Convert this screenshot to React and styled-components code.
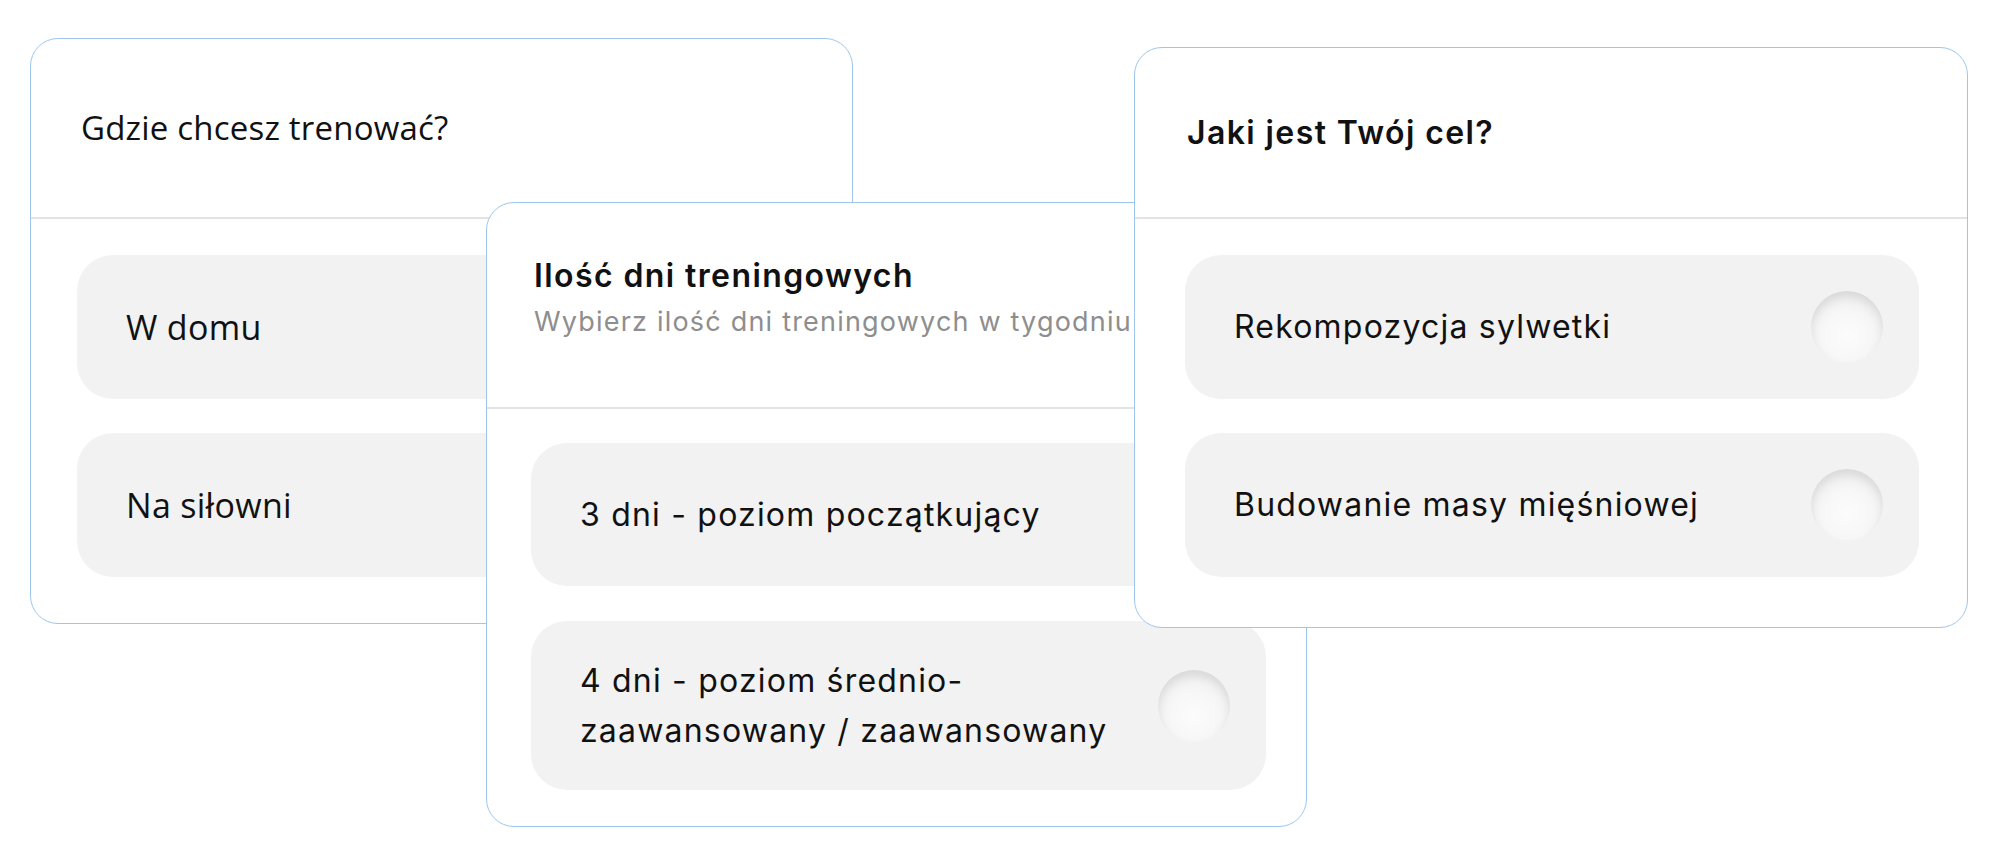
import React from "react";
import styled, { createGlobalStyle } from "styled-components";

const GlobalStyle = createGlobalStyle`
  html, body {
    margin: 0;
    padding: 0;
    background: #ffffff;
  }
  * {
    box-sizing: border-box;
  }
`;

const Canvas = styled.div`
  position: relative;
  width: 2000px;
  height: 858px;
  overflow: hidden;
  background: #ffffff;
`;

// the three cards are laid over each other like windows on a desktop
const Card = styled.section`
  position: absolute;
  left: ${(p) => p.$left}px;
  top: ${(p) => p.$top}px;
  width: ${(p) => p.$width}px;
  height: ${(p) => p.$height}px;
  z-index: ${(p) => p.$z};
  display: flex;
  flex-direction: column;
  background: #ffffff;
  border: 1px solid #9ec6ec;
  border-radius: 28px;
  overflow: hidden;
  font-family: ${(p) =>
    p.$ubuntu
      ? `"Open Sans", "Noto Sans", sans-serif`
      : `Inter, "Noto Sans", sans-serif`};
  color: #111111;
`;

const Header = styled.header`
  flex: 0 0 ${(p) => p.$height}px;
  display: flex;
  flex-direction: column;
  justify-content: center;
  gap: 10px;
  padding: ${(p) => p.$pad || "0"};
  padding-left: ${(p) => p.$left}px;
  border-bottom: 2px solid #e3e3e3;
`;

const Title = styled.h2`
  margin: 0;
  font-size: ${(p) => (p.$ubuntu ? "33px" : "32px")};
  font-weight: ${(p) => (p.$ubuntu ? 400 : 600)};
  letter-spacing: ${(p) => (p.$ubuntu ? "0.2px" : "1.4px")};
  line-height: 38px;
  white-space: nowrap;
`;

const Subtitle = styled.p`
  margin: 0;
  font-size: 27px;
  line-height: 34px;
  letter-spacing: 1.2px;
  color: #8e8e8e;
  white-space: nowrap;
`;

const Options = styled.div`
  display: flex;
  flex-direction: column;
  gap: ${(p) => p.$gap}px;
  padding: ${(p) => p.$pad};
`;

const Option = styled.div`
  display: flex;
  align-items: center;
  justify-content: space-between;
  min-height: ${(p) => p.$height}px;
  padding: 0 36px 0 49px;
  background: #f2f2f2;
  border-radius: 36px;
`;

const Label = styled.span`
  font-size: ${(p) => (p.$ubuntu ? "34px" : "32px")};
  letter-spacing: ${(p) => (p.$ubuntu ? "0.3px" : "1.2px")};
  line-height: 50px;
  white-space: ${(p) => (p.$wrap ? "normal" : "nowrap")};
  max-width: 560px;
`;

const Radio = styled.span`
  flex: 0 0 72px;
  width: 72px;
  height: 72px;
  border-radius: 50%;
  background: radial-gradient(
    circle at 50% 62%,
    #fcfcfc 0%,
    #f7f7f7 42%,
    #ebebeb 78%,
    #dedede 100%
  );
  box-shadow: inset 0 6px 8px rgba(0, 0, 0, 0.08);
`;

export default function App() {
  return (
    <>
      <GlobalStyle />
      <Canvas>
        <Card $left={30} $top={38} $width={823} $height={586} $z={1} $ubuntu>
          <Header $height={180} $left={50}>
            <Title $ubuntu>Gdzie chcesz trenować?</Title>
          </Header>
          <Options $gap={34} $pad="36px 47px 0 46px">
            <Option $height={144}>
              <Label $ubuntu>W domu</Label>
              <Radio />
            </Option>
            <Option $height={144}>
              <Label $ubuntu>Na siłowni</Label>
              <Radio />
            </Option>
          </Options>
        </Card>

        <Card $left={486} $top={202} $width={821} $height={625} $z={2}>
          <Header $height={206} $left={47} $pad="0 0 14px 0">
            <Title>Ilość dni treningowych</Title>
            <Subtitle>Wybierz ilość dni treningowych w tygodniu</Subtitle>
          </Header>
          <Options $gap={35} $pad="34px 40px 0 44px">
            <Option $height={143}>
              <Label>3 dni - poziom początkujący</Label>
              <Radio />
            </Option>
            <Option $height={169}>
              <Label $wrap>4 dni - poziom średnio-zaawansowany / zaawansowany</Label>
              <Radio />
            </Option>
          </Options>
        </Card>

        <Card $left={1134} $top={47} $width={834} $height={581} $z={3}>
          <Header $height={171} $left={52}>
            <Title>Jaki jest Twój cel?</Title>
          </Header>
          <Options $gap={34} $pad="36px 48px 0 50px">
            <Option $height={144}>
              <Label>Rekompozycja sylwetki</Label>
              <Radio />
            </Option>
            <Option $height={144}>
              <Label>Budowanie masy mięśniowej</Label>
              <Radio />
            </Option>
          </Options>
        </Card>
      </Canvas>
    </>
  );
}
